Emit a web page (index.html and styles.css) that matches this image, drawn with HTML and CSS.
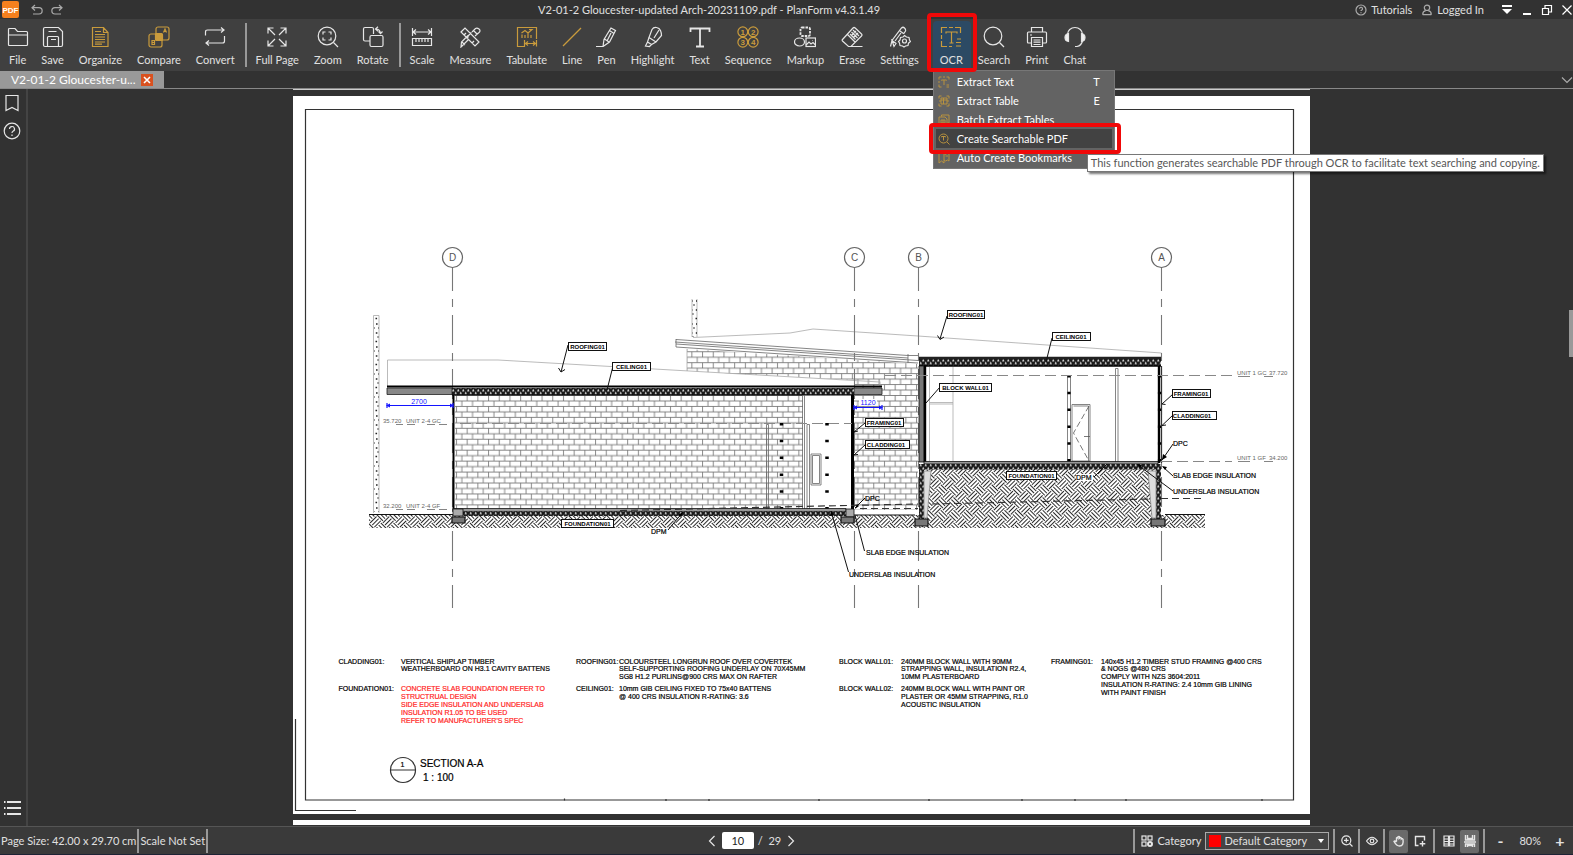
FILE: index.html
```
<!DOCTYPE html>
<html lang="en">
<head>
<meta charset="utf-8">
<title>V2-01-2 Gloucester-updated Arch-20231109.pdf - PlanForm v4.3.1.49</title>
<link rel="stylesheet" href="styles.css">
</head>
<body>
<div class="app">
  <header class="titlebar">
    <div class="titlebar-left">
      <svg class="logo" viewBox="0 0 17 17" aria-hidden="true"><rect width="17" height="17" rx="2" fill="#f5801e"/><text x="8.5" y="12" text-anchor="middle" class="logo-text">PDF</text></svg>
      <button class="plain" aria-label="Undo"><svg class="i12 dim" viewBox="0 0 12 12"><path d="M4 1 1 3.7 4 6.500M1.200 3.700H8a3 3 0 0 1 0 6.300H2"/></svg></button>
      <button class="plain" aria-label="Redo"><svg class="i12 dim" viewBox="0 0 12 12"><path d="M8 1l3 2.700L8 6.500M10.800 3.700H4a3 3 0 0 0 0 6.300h6"/></svg></button>
    </div>
    <h1 class="title">V2-01-2 Gloucester-updated Arch-20231109.pdf - PlanForm v4.3.1.49</h1>
    <div class="titlebar-right">
      <button class="plain link"><svg class="i12 dim" viewBox="0 0 12 12"><circle cx="6" cy="6" r="5"/><path d="M4.500 4.800a1.500 1.500 0 1 1 2.200 1.300q-.7.3-.7 1M6 8.200v1"/></svg>Tutorials</button>
      <button class="plain link"><svg class="i12 dim" viewBox="0 0 12 12"><circle cx="6" cy="3.800" r="2.700"/><path d="M1.700 10.700c0-3 1.500-3.700 3-4M10.300 10.700c0-3-1.500-3.700-3-4M1.700 10.700h8.600"/></svg>Logged In</button>
      <div class="window-buttons">
        <button class="plain" aria-label="Options"><svg class="i12 bright" viewBox="0 0 12 12"><path d="M1 2h10" stroke-width="2"/><path d="M1 5h10L6 10z" fill="#fff" stroke="none"/></svg></button>
        <button class="plain" aria-label="Minimize"><svg class="i12 bright" viewBox="0 0 12 12"><path d="M2 10h8" stroke-width="2"/></svg></button>
        <button class="plain" aria-label="Restore"><svg class="i12 bright" viewBox="0 0 12 12"><path d="M1.500 4.500h6v6h-6zM4 4V1.500h6.500V8H8"/></svg></button>
        <button class="plain" aria-label="Close"><svg class="i12 bright" viewBox="0 0 12 12"><path d="M1.500 1.500l9 9M10.500 1.500l-9 9"/></svg></button>
      </div>
    </div>
  </header>

  <nav class="toolbar" aria-label="Tools">
    <button class="tool"><svg viewBox="0 0 22 22"><path d="M1.500 18.500v-15q0-1 1-1h5.500l2.500 3h9q1 0 1 1v12q0 1-1 1h-17q-1 0-1-1zM1.500 9h19"/></svg>File</button>
    <button class="tool"><svg viewBox="0 0 22 22"><path d="M3 1.500h13.500l4 4V19q0 1.500-1.500 1.500H3q-1.500 0-1.500-1.500V3Q1.500 1.500 3 1.500zM5.500 20v-8.500q0-1 1-1h9q1 0 1 1V20M6.500 5.500h8M9 13.500h5"/></svg>Save</button>
    <button class="tool gold"><svg viewBox="0 0 22 22"><path d="M3.500 1.500h11l4.500 5v14H3.500zM14.500 1.500v5h4.500M6 5.500h6M6 8.500h10M6 11h10M6 13.500h10M6 16h10M6 18.200h7"/></svg>Organize</button>
    <button class="tool gold"><svg viewBox="0 0 22 22"><rect x="8" y="1" width="13" height="13" rx="2"/><rect x="1" y="8" width="13" height="13" rx="2"/><rect x="7.500" y="7.500" width="7" height="7" rx="1" fill="#c99b3c"/><path d="M15.500 6.500 17 3l1.500 3.500M16 5.500h2M4 14.500v4h2.500v-4zM4 16.500h2.500"/></svg>Compare</button>
    <button class="tool"><svg viewBox="0 0 22 22"><path d="M1.500 9.500V6q0-2 2-2H20M17 1.500 20 4l-3 2.500M20.500 10v5q0 2-2 2H2M5 14.500 2 17l3 2.500"/></svg>Convert</button>
    <span class="divider"></span>
    <button class="tool"><svg viewBox="0 0 22 22"><path d="M9 9 2 2M2 7.500V2h5.500M13 9l7-7M14.500 2H20v5.500M9 13l-7 7M2 14.500V20h5.500M13 13l7 7M20 14.500V20h-5.500"/></svg>Full Page</button>
    <button class="tool"><svg viewBox="0 0 22 22"><circle cx="10" cy="10" r="8.800"/><path d="M16.500 16.500 21 21M6 8.500V6h2.500M11.500 6H14v2.500M14 11.500V14h-2.500M8.500 14H6v-2.500"/></svg>Zoom</button>
    <button class="tool"><svg viewBox="0 0 22 22"><path d="M8 15H3q-1.500 0-1.500-1.500V3Q1.500 1.500 3 1.500h7q1.500 0 1.500 1.500v5M14 3q4 0 4.500 4.500M16.500 5.500l2 2.200 2-2.200M16 .800 13.500 3 16 5.200"/><rect x="8" y="9.500" width="13" height="11" rx="1.500"/></svg>Rotate</button>
    <span class="divider"></span>
    <button class="tool"><svg viewBox="0 0 22 22"><path d="M1.500 2v8M20.500 2v8M2 6h18M5 3.500 2 6l3 2.500M17 3.500 20 6l-3 2.500M1.500 12.500h19v7h-19zM5 12.500V16M8 12.500V16M11 12.500V16M14 12.500V16M17 12.500V16"/></svg>Scale</button>
    <button class="tool"><svg viewBox="0 0 22 22"><path d="M2 6l4-4 14 14-4 4zM5 9l2-2M8 12l1.500-1.500M13 17l2-2M9.500 13.500 3 20l-1 1 .5-5L9 9.500M13 6l3.500-3.500Q18 1.500 20 3t0 3.500L16 10M12.500 6.500 9 10M14.500 4.500l3.500 3.500M3 16l3 3"/></svg>Measure</button>
    <button class="tool gold"><svg viewBox="0 0 22 22"><path d="M9 20.500H1.500v-19h19V13M6 12V8.500M9 12V9M12 12V7M15 12V9M5.500 7 9 4.500 12 7l4-3.500h-3M8.500 14v6.500M20.500 14v6.500M9 17.500h11M12 15.500l-2.500 2 2.500 2M17 15.500l2.500 2-2.500 2"/></svg>Tabulate</button>
    <button class="tool gold"><svg viewBox="0 0 22 22"><path d="M2 20 20 2"/></svg>Line</button>
    <button class="tool"><svg viewBox="0 0 22 22"><path d="M1 20.500h7l1-7L16 2l4.500 2.500L14.500 16 8 20.500M9.500 13l4.500 3M14.500 4.500l4.500 3M12 15l4-8"/></svg>Pen</button>
    <button class="tool"><svg viewBox="0 0 22 22"><path d="M10 3.500q1.500-2.500 4.500-2t4 3 1 5L14 16l-7-4.500zM7 11.500 5.500 16l4 2.500L14 16M5.500 16 3.500 20l4 .500 2-2M17 4l-5 8"/></svg>Highlight</button>
    <button class="tool"><svg viewBox="0 0 22 22"><path d="M1.500 6V2.500h19V6M11 2.500v18M7 20.500h8" stroke-width="1.800"/></svg>Text</button>
    <button class="tool gold"><svg viewBox="0 0 22 22"><circle cx="5.800" cy="5.800" r="4.900"/><circle cx="16.200" cy="5.800" r="4.900"/><circle cx="5.800" cy="16.200" r="4.900"/><circle cx="16.200" cy="16.200" r="4.900"/><g class="seq"><text x="5.800" y="8.500">1</text><text x="16.200" y="8.500">2</text><text x="5.800" y="19">3</text><text x="16.200" y="19">4</text></g></svg>Sequence</button>
    <button class="tool"><svg viewBox="0 0 22 22"><rect x="6.500" y="1.500" width="9.500" height="8.500" rx="1.500" stroke-width="1.800" stroke-dasharray="2.500 1"/><ellipse cx="5.500" cy="16" rx="5" ry="4"/><rect x="12" y="12" width="9.500" height="8.500"/><path d="M12 19l3-3 2 2 2-1.500 2.500 2.500M18.500 14.500h.5"/></svg>Markup</button>
    <button class="tool"><svg viewBox="0 0 22 22"><path d="M1.500 13.500 12 2q1-1 2.200 0L20.500 8q1 1 0 2L10 20.500H7.500L1.500 15q-.7-.700 0-1.500zM6.500 8.500 14 16M10 20.500h11.500M12 4l6 6M10.500 6l6 6M9 8l5.500 5.500M17 7l-5 5M15 5l-5 5"/></svg>Erase</button>
    <button class="tool"><svg viewBox="0 0 22 22"><path d="M1.500 20.500 3 14.500 12.500 2q1.500-1.500 3 0t1 3l-2 3M3 14.500l4 3-2 3zM11 5l3.500 2.500M6 15l6-8"/><circle cx="15.500" cy="15" r="2"/><path d="M15.500 9.500l2 1.500 2.500.5.500 2.500 1 1.500-2 1.700-.5 2.300-2.500.500-1.500 1-1.500-1-2.500-.500-.500-2.500-1-1.500 1.500-1.500.5-2.500 2.500-.500z"/></svg>Settings</button>
    <span class="divider"></span>
    <div class="ocr">
      <button class="tool gold active" aria-haspopup="true" aria-expanded="true"><svg viewBox="0 0 22 22"><path d="M1.500 7V1.500H7M9 1.500h4M15 1.500h5.500V7M1.500 9v4M1.500 15v5.500H7M9 20.500h3M6 7.500V6h11v1.500M11.500 6v11M9.500 17h4M17 13h4M16 16.500h5M16 20h5"/></svg>OCR</button>
      <ul class="menu" role="menu">
        <li><button class="item" role="menuitem"><svg viewBox="0 0 12 12"><path d="M1 3.500V1h2.500M5 1h2M8.500 1H11v2.500M1 5v2M1 8.500V11h2.500M3.500 4.500V4h5v.5M6 4v5M8.500 9H11M8.500 11H11"/></svg><span>Extract Text</span><kbd>T</kbd></button></li>
        <li><button class="item" role="menuitem"><svg viewBox="0 0 12 12"><path d="M1 3.500V1h2.500M8.500 1H11v2.500M1 8.500V11h2.500M8.500 11H11V8.500M3 3h6v6H3zM3 5h6M5.500 3v6M1 6h2M9 6h2"/></svg><span>Extract Table</span><kbd>E</kbd></button></li>
        <li><button class="item" role="menuitem"><svg viewBox="0 0 12 12"><path d="M3.500 2.500V1H11v8H9.500M1 3h6l2 2v6H1zM3 6h4v3H3zM5 6v3"/></svg><span>Batch Extract Tables</span></button></li>
        <li><button class="item current" role="menuitem"><svg viewBox="0 0 12 12"><circle cx="5.500" cy="5.500" r="4.500"/><path d="M9 9l2.500 2.500M3.500 4.300V3.500h4v.8M5.500 3.500v4"/></svg><span>Create Searchable PDF</span></button></li>
        <li><button class="item" role="menuitem"><svg viewBox="0 0 12 12"><path d="M3 1H1v10l2.500-2L6 11V8M6 1.500l1.500 1 2-1.500L11 2v7l-1.500-1L7.500 9 6 8zM7.500 4H10"/></svg><span>Auto Create Bookmarks</span></button></li>
      </ul>
      <div class="mark mark-button"></div>
      <div class="mark mark-item"></div>
      <div class="tooltip" role="tooltip">This function generates searchable PDF through OCR to facilitate text searching and copying.</div>
    </div>
    <button class="tool"><svg viewBox="0 0 22 22"><circle cx="10" cy="10" r="8.800"/><path d="M16.500 16.500 21 21"/></svg>Search</button>
    <button class="tool"><svg viewBox="0 0 22 22"><path d="M5.500 6V1.500h11V6M5.500 17h-3q-1 0-1-1V7q0-1 1-1h17q1 0 1 1v9q0 1-1 1h-3M5.500 11.500h11v9h-11zM7.500 14h7M7.500 16.200h7M7.500 18.500h7M4 9h2"/></svg>Print</button>
    <button class="tool"><svg viewBox="0 0 22 22"><path d="M3.500 8.500a7.500 7 0 0 1 15 0M18.500 15q-1 4.500-5.500 5.500h-2"/><path d="M4.500 7.500v8Q1 15 1 11.500T4.500 7.500zM17.500 7.500v8q3.500-.5 3.500-4t-3.500-4z" fill="#f0f0f0"/></svg>Chat</button>
  </nav>

  <div class="tabs">
    <div class="tab"><span>V2-01-2 Gloucester-u...</span><button class="tab-close" aria-label="Close tab"><svg viewBox="0 0 12 12"><path d="M3 3l6 6M9 3l-6 6"/></svg></button></div>
    <button class="plain tabs-more" aria-label="All tabs"><svg class="i12 dim" viewBox="0 0 12 12"><path d="M1 3.500l5 5 5-5"/></svg></button>
  </div>

  <div class="workspace">
    <aside class="rail">
      <button class="plain" aria-label="Bookmarks"><svg class="i18" viewBox="0 0 18 18"><path d="M3 1.500h12v15L9 13.500 3 16.500z"/></svg></button>
      <button class="plain" aria-label="Help"><svg class="i18" viewBox="0 0 18 18"><circle cx="9" cy="9" r="7.800"/><path d="M6.500 7a2.500 2.500 0 1 1 3.500 2.300q-1 .5-1 1.700M9 12.500V14"/></svg></button>
      <button class="plain rail-end" aria-label="Outline"><svg class="i18" viewBox="0 0 18 18"><path d="M1 3h1.500M4 3h14M1 9h1.500M4 9h14M1 15h1.500M4 15h14" stroke-width="1.800"/></svg></button>
    </aside>
    <main class="viewer">
      <svg class="sheet" viewBox="293 89 1017 737" role="img" aria-label="Section A-A drawing">
        <defs>
          <pattern id="brick" width="10.700" height="10.940" patternUnits="userSpaceOnUse" x="454" y="395"><path d="M0 .5H10.700M0 5.970H10.700M2.500 .5V5.970M7.850 5.970V11" stroke="#6a6a6a" stroke-width=".8" fill="none"/></pattern>
          <pattern id="earth" width="18" height="18" patternUnits="userSpaceOnUse" patternTransform="rotate(45)"><path d="M0 1.500H9M0 4.500H9M0 7.500H9M10.500 0V9M13.500 0V9M16.500 0V9M1.500 9V18M4.500 9V18M7.500 9V18M9 10.500H18M9 13.500H18M9 16.500H18" stroke="#111" stroke-width=".9" fill="none"/></pattern>
          <pattern id="insul" width="5" height="6" patternUnits="userSpaceOnUse" x="452" y="388.500"><rect width="5" height="6" fill="#1a1a1a"/><path d="M0 2.800 1.250.4 2.500 2.800zM2.500 5.600 3.750 3.200 5 5.600z" fill="#fff"/></pattern>
          <pattern id="rubble" width="5" height="23" patternUnits="userSpaceOnUse"><path d="M1 2h1.600M3.400 6h1.200M.8 11h1.600M2.500 15h1M.5 19.500h1.600" stroke="#222" stroke-width="1.500"/></pattern>
          <g id="bubble"><circle cy="257.500" r="10" fill="#fff" stroke="#666"/></g>
        </defs>

        <path d="M293 96H1310V814H293zM293 820H1310V825H293z" fill="#fff"/>
        <path d="M293 89H1310V90H293z" fill="#ccc"/>
        <path d="M305.500 109.500h988v690.500h-988zM295.500 719v91.500H356" class="ln"/>
        <path d="M564.500 798.500v2M666 799v2M709 799v2M819 799v2M929 799v2M1022 799v2M1075 799v2M1126 799v2M1262 799v2" class="ln"/>

        <!-- side posts -->
        <path d="M373.500 315.500h5.500V513M373.500 315.500V513M692 299v38M697 299v38" class="thin"/>
        <path d="M374 316h5v196h-5zM692 299h5v38h-5z" fill="url(#rubble)"/>

        <!-- brickwork -->
        <path d="M687 349 918 364V510H854V380L687 371z" fill="url(#brick)"/>
        <path d="M455 395h348v114H455z" fill="url(#brick)"/>
        <path d="M880 381.500v5.500M687 349v22" class="thin"/>

        <!-- roof outlines -->
        <path d="M387.500 386V360H498L880 382M693 337.500 790 333 813 329 918 336 1161.500 353v4" class="thin"/>
        <path d="M676 339.500 908 355.500H918M675 342 908 358M676 344 918 360.500M676 339v8L918 363M908 354v9" class="mid"/>

        <!-- earth hatch -->
        <path d="M369 515h549v13H369zM1161 515h44v13h-44zM919 469h242v59H919z" fill="url(#earth)"/>
        <path d="M369 514.500h84M854 515h61M1165 514.500h40" stroke="#111" stroke-width="1.200"/>

        <!-- grid lines -->
        <g stroke="#777" stroke-width="1.100" stroke-dasharray="30 8 8 8">
          <path d="M452.500 261V608M854.500 261V608M918.500 261V608M1161.500 261V608"/>
        </g>
        <use href="#bubble" x="452.500"/><use href="#bubble" x="854.500"/><use href="#bubble" x="918.500"/><use href="#bubble" x="1161.500"/>
        <g class="grid-name"><text x="452.500" y="261">D</text><text x="854.500" y="261">C</text><text x="918.500" y="261">B</text><text x="1161.500" y="261">A</text></g>

        <!-- lower building -->
        <path d="M387 388h65v6.500h-65zM854 388h28v6.500h-28z" fill="#888" stroke="#222" stroke-width=".8"/>
        <path d="M452 388h402v7H452z" fill="url(#insul)"/>
        <path d="M387 386.500h495" stroke="#000" stroke-width="2.200"/>
        <path d="M452 395h402" stroke="#000" stroke-width="1.200"/>
        <path d="M453.500 395V512" stroke="#000" stroke-width="2"/>
        <path d="M852.500 395V509" stroke="#000" stroke-width="3"/>
        <path d="M804.500 396h46v112h-46z" fill="#fff"/>
        <path d="M802.500 395V509M804.500 395V509M766.500 424.500h2V509h-2zM807 424.500h2.500V509H807zM811 454h10v31h-10zM812.500 455.500h7v28h-7z" class="mid"/>
        <path d="M460 423.500H852" class="dash"/>
        <path d="M781.500 423V510M827 423V510" stroke="#000" stroke-width="3.500" stroke-dasharray="2.500 14.300"/>
        <path d="M453 508.500H846v3H453z" fill="#999" stroke="#111" stroke-width=".8"/>
        <path d="M462 511.500h384v4.500H462z" fill="url(#insul)"/>
        <path d="M453 509h10v7h-10zM846 509h8v8h-8z" fill="#aaa" stroke="#111" stroke-width=".8"/>
        <path d="M452 517h13v6h-13zM841 517h13v6h-13z" fill="#777" stroke="#111"/>
        <path d="M620 510.500 800 506.500 918 504" class="dash-dark"/>
        <path d="M860 508.500h58" class="dash-dark"/>

        <!-- upper building -->
        <path d="M926 366h232v95H926z" fill="#fff"/>
        <path d="M919 358h242v8H919z" fill="url(#insul)"/>
        <path d="M919 358h242" stroke="#222" stroke-width="2.400"/>
        <path d="M919 366h242" stroke="#000" stroke-width="1.500"/>
        <path d="M919 366h5v96h-5z" fill="#777" stroke="#111" stroke-width=".8"/>
        <path d="M925 366v96M1159 366v97" stroke="#000" stroke-width="2.400"/>
        <path d="M1161.500 366V463" stroke="#333"/>
        <path d="M929.500 367v94M953 367v94M929.500 402.500H953M929.500 404H953" class="thin"/>
        <path d="M1067.500 375.500h3V461h-3zM1115.500 368.500h2.500V468h-2.500zM1072 404.500h18V461h-18zM1073.500 406h15V461" class="mid"/>
        <path d="M1089 406 1073.500 433 1089 461M1084 436.500h6" class="dash-mid"/>
        <path d="M1069 375V462M1159.500 375V462" stroke="#000" stroke-width="3.200" stroke-dasharray="2.500 14.300"/>
        <path d="M885 375.500H1232M1161 461.500H1232" class="dash"/>
        <path d="M924 461.500h234v2.500H924z" fill="#999" stroke="#111" stroke-width=".8"/>
        <path d="M919 464h242v5.500H919zM919 464h5v55h-5zM1156 464h5v55h-5z" fill="url(#insul)"/>
        <path d="M924 471h7l-4 47h-3zM1148 471h8v47h-4z" fill="#ddd" stroke="#888" stroke-width=".8"/>
        <path d="M915 519h13v7h-13zM1151 519h14v7h-14z" fill="#777" stroke="#111"/>
        <path d="M932 504 1150 499M1161 498.500h42" class="dash-dark"/>

        <!-- leaders -->
        <path d="M568 345 561 372M558.500 368l2.500 4 4-2.500M612.500 368 607 390M947 316 940 339M937.500 335.500l2.500 4 4-2.500M1052 338 1046 362M940 387 926 403M865 423 854 432l4-1M865 445 854 455l4-.5M865 498 855 508M864.500 551 855 515M848.500 572 831 511M668 530 683 512M1173 394 1162 404l3.500.500M1173 415 1162 425.500l4-.500M1173 444 1162 460M1173 476 1163 467M1173 491 1138 465M1094 477 1107 464" class="leader"/>
        <path d="M855 509l2-5 2 2zM831 511l-1 5 4-1zM683 512l-5 3 3 2zM1162 460l1-6 4 3zM1162 466l5 1-2 3zM1137 464l5 1-2 3z"/>

        <!-- boxed tags -->
        <g class="tag-box">
          <rect x="568.500" y="342.500" width="38" height="8"/><rect x="612.500" y="362.500" width="38" height="8"/>
          <rect x="865.500" y="418.500" width="38" height="8"/><rect x="865.500" y="440.500" width="44" height="8"/>
          <rect x="561.500" y="519.500" width="52" height="8"/><rect x="947.500" y="310.500" width="37" height="8"/>
          <rect x="1052.500" y="332.500" width="38" height="8"/><rect x="939.500" y="383.500" width="52" height="8"/>
          <rect x="1172.500" y="389.500" width="38" height="8"/><rect x="1172.500" y="411.500" width="44" height="8"/>
          <rect x="1006.500" y="471.500" width="50" height="8"/><rect x="1076" y="474" width="17" height="7" stroke="none"/>
        </g>
        <g class="tag">
          <text x="587.500" y="349">ROOFING01</text><text x="631.500" y="369">CEILING01</text>
          <text x="884" y="425">FRAMING01</text><text x="886" y="447">CLADDING01</text>
          <text x="587.500" y="526">FOUNDATION01</text><text x="966" y="317">ROOFING01</text>
          <text x="1071" y="339">CEILING01</text><text x="965.500" y="390">BLOCK WALL01</text>
          <text x="1191" y="396">FRAMING01</text><text x="1192" y="418">CLADDING01</text>
          <text x="1031.500" y="478">FOUNDATION01</text>
        </g>
        <g class="note">
          <text x="651" y="534">DPM</text><text x="865" y="501">DPC</text>
          <text x="866" y="555">SLAB EDGE INSULATION</text><text x="849" y="577">UNDERSLAB INSULATION</text>
          <text x="1173" y="446">DPC</text><text x="1076" y="480">DPM</text>
          <text x="1173" y="478">SLAB EDGE INSULATION</text><text x="1173" y="494">UNDERSLAB INSULATION</text>
        </g>
        <g class="level">
          <text x="383" y="423">35.720</text><text x="406" y="423">UNIT 2-4 GC</text>
          <text x="383" y="508">32.200</text><text x="406" y="508">UNIT 2-4 GF</text>
          <text x="1237" y="375">UNIT 1 GC</text><text x="1269" y="375">37.720</text>
          <text x="1237" y="460">UNIT 1 GF</text><text x="1269" y="460">34.200</text>
        </g>
        <path d="M396 424.500h7M407 424.500h8M427 424.500h8M439 424.500h8M396 509.500h7M407 509.500h8M427 509.500h8M439 509.500h8M1238 376.500h12M1264 376.500h9M1238 461.500h12M1264 461.500h9" class="mid"/>
        <path d="M387 405.500h66M854 407.500h28M387 403v5M453 403v5M854 405v5M882 405v5" stroke="#1414ff" fill="none"/>
        <path d="M386 405.500l4-2v4zM454 405.500l-4-2v4zM853 407.500l4-2v4zM883 407.500l-4-2v4z" fill="#1414ff"/>
        <path d="M859 399h18v6.500h-18z" fill="#fff"/>
        <g class="dim-text"><text x="419" y="404">2700</text><text x="868" y="405">1120</text></g>

        <!-- schedule -->
        <g class="note">
          <text x="338.500" y="664">CLADDING01:</text>
          <text x="401" y="664">VERTICAL SHIPLAP TIMBER</text><text x="401" y="671">WEATHERBOARD ON H3.1 CAVITY BATTENS</text>
          <text x="338.500" y="691">FOUNDATION01:</text>
          <g class="revised"><text x="401" y="691">CONCRETE SLAB FOUNDATION REFER TO</text><text x="401" y="699">STRUCTRUAL DESIGN</text><text x="401" y="707">SIDE EDGE INSULATION AND UNDERSLAB</text><text x="401" y="715">INSULATION R1.05 TO BE USED</text><text x="401" y="723">REFER TO MANUFACTURER'S SPEC</text></g>
          <text x="576" y="664">ROOFING01:</text>
          <text x="619" y="664">COLOURSTEEL LONGRUN ROOF OVER COVERTEK</text><text x="619" y="671">SELF-SUPPORTING ROOFING UNDERLAY ON 70X45MM</text><text x="619" y="679">SG8 H1.2 PURLINS@900 CRS MAX ON RAFTER</text>
          <text x="576" y="691">CEILING01:</text>
          <text x="619" y="691">10mm GIB CEILING FIXED TO 75x40 BATTENS</text><text x="619" y="699">@ 400 CRS INSULATION R-RATING: 3.6</text>
          <text x="839" y="664">BLOCK WALL01:</text>
          <text x="901" y="664">240MM BLOCK WALL WITH 90MM</text><text x="901" y="671">STRAPPING WALL, INSULATION R2.4,</text><text x="901" y="679">10MM PLASTERBOARD</text>
          <text x="839" y="691">BLOCK WALL02:</text>
          <text x="901" y="691">240MM BLOCK WALL WITH PAINT OR</text><text x="901" y="699">PLASTER OR 45MM STRAPPING, R1.0</text><text x="901" y="707">ACOUSTIC INSULATION</text>
          <text x="1051" y="664">FRAMING01:</text>
          <text x="1101" y="664">140x45 H1.2 TIMBER STUD FRAMING @400 CRS</text><text x="1101" y="671">&amp; NOGS @480 CRS</text><text x="1101" y="679">COMPLY WITH NZS 3604:2011</text><text x="1101" y="687">INSULATION R-RATING: 2.4 10mm GIB LINING</text><text x="1101" y="695">WITH PAINT FINISH</text>
        </g>
        <path d="M390.500 770a12.500 12.500 0 1 0 25 0a12.500 12.500 0 1 0-25 0h25" class="ln"/>
        <text x="402.500" y="767" text-anchor="middle" class="note">1</text>
        <g class="heading"><text x="420" y="767">SECTION A-A</text><text x="423" y="781">1 : 100</text></g>
      </svg>
      <span class="scroll-thumb"></span>
    </main>
  </div>

  <footer class="status">
    <div class="status-left"><span class="cell">Page Size: 42.00 x 29.70 cm</span><span class="cell">Scale Not Set</span></div>
    <div class="pager">
      <button class="plain" aria-label="Previous page"><svg class="i12" viewBox="0 0 12 12"><path d="M8.500 1 3.500 6l5 5"/></svg></button>
      <input type="text" value="10" aria-label="Page">
      <span>/&nbsp; 29</span>
      <button class="plain" aria-label="Next page"><svg class="i12" viewBox="0 0 12 12"><path d="M3.500 1l5 5-5 5"/></svg></button>
    </div>
    <div class="status-right">
      <div class="group category">
        <svg class="i12" viewBox="0 0 12 12"><rect x="1" y="1" width="4" height="4"/><rect x="7" y="1" width="4" height="4"/><rect x="1" y="7" width="4" height="4"/><circle cx="9" cy="9" r="2" stroke-width="2"/></svg>
        <label for="cat">Category</label>
        <div class="select"><span class="swatch"></span><select id="cat"><option>Default Category</option></select><svg class="caret" viewBox="0 0 6 4"><path d="M0 0h6L3 4z" fill="#fff"/></svg></div>
      </div>
      <div class="group"><button class="plain sq" aria-label="Zoom area"><svg class="i12" viewBox="0 0 12 12"><circle cx="5.300" cy="5.300" r="4.500"/><path d="M8.500 8.500l3 3M3 5.300h4.600M5.300 3v4.600"/></svg></button></div>
      <div class="group"><button class="plain sq" aria-label="View"><svg class="i12" viewBox="0 0 12 12"><path d="M.5 6Q6-1.500 11.500 6 6 13.500.5 6z"/><circle cx="6" cy="6" r="1.800"/></svg></button></div>
      <div class="group pair"><button class="plain sq on" aria-label="Pan"><svg class="i12" viewBox="0 0 12 12"><path d="M3.500 6.500V3q.8-1 1.500 0V2q.9-1 1.700 0v1q.9-.8 1.600 0v1q1-.8 1.700.3Q11 11 6.500 11 3.500 11 1 6.500q.8-1.200 2.500.5" stroke-width="1.400"/></svg></button><button class="plain sq" aria-label="Select area"><svg class="i12" viewBox="0 0 12 12"><path d="M4.500 10.500h-3v-9h9v4M8.500 6v5.500M5.700 8.700h5.600" stroke-width="1.400"/></svg></button></div>
      <div class="group pair"><button class="plain sq" aria-label="Two pages"><svg class="i12" viewBox="0 0 12 12"><path d="M1 1h4.500v10H1zM6.500 1H11v10H6.500zM1 4h4.500M1 6.500h4.500M1 9h4.500M6.500 4H11M6.500 6.500H11M6.500 9H11"/></svg></button><button class="plain sq on" aria-label="Continuous"><svg class="i12" viewBox="0 0 12 12"><path d="M1.500 0v5h9V0M3.500 0v3.500h5V0M0 7h12M1.500 12V9h9v3M3.500 12v-1.500h5V12" stroke-width="1.400"/></svg></button></div>
      <div class="group zoom"><button class="plain sign" aria-label="Zoom out">-</button><span>80%</span><button class="plain sign" aria-label="Zoom in">+</button></div>
    </div>
  </footer>
</div>
</body>
</html>
```
FILE: styles.css
```
* { box-sizing: border-box; }
body { margin: 0; background: #323232; color: #e0e0e0; font: 11px/16px Lato, "Open Sans", sans-serif; }
.app { height: 100vh; display: flex; flex-direction: column; overflow: hidden; }
button, input, select { font: inherit; color: inherit; }
svg { fill: none; stroke: #e6e6e6; stroke-width: 1.2; flex: none; }
.plain { border: 0; background: none; padding: 0; display: flex; align-items: center; justify-content: center; }
.i12 { width: 12px; height: 12px; }
.i18 { width: 18px; height: 18px; }
.dim { stroke: #aaa; }
.bright { stroke: #fff; }

.titlebar { height: 19px; flex: none; display: flex; align-items: center; background: #323232; }
.titlebar-left { display: flex; align-items: center; gap: 8px; padding-left: 2px; }
.logo { width: 17px; height: 17px; stroke: none; margin-right: 4px; }
.logo-text { font: bold 8px "Liberation Sans", sans-serif; fill: #fff; }
.title { flex: 1; margin: 0; text-align: center; font-size: 11px; font-weight: 400; }
.titlebar-right { display: flex; align-items: center; gap: 9px; }
.link { gap: 4px; }
.window-buttons { display: flex; gap: 8px; margin-left: 8px; }

.toolbar { height: 52px; flex: none; display: flex; align-items: stretch; padding-left: 2px; background: #404040; }
.tool { display: flex; flex-direction: column; align-items: center; gap: 4px; border: 0; background: none; padding: 7px 8px 0 7px; white-space: nowrap; }
.tool svg { width: 22px; height: 22px; margin: 0 -4px; }
.gold svg { stroke: #c99b3c; }
.seq { fill: #c99b3c; stroke: none; font: bold 8px "Liberation Sans", sans-serif; text-anchor: middle; }
.divider { width: 2px; margin: 4px 2px; background: #999; }
.ocr { position: relative; display: flex; }
.active { background: #2c4a64; border-radius: 4px; margin-top: 2px; padding-top: 5px; }

.menu { position: absolute; z-index: 2; top: 51px; left: 0; width: 182px; margin: 0; padding: 1px 2px; list-style: none; background: #636363; border: 1px solid #777; }
.item { width: 100%; height: 19px; display: flex; align-items: center; gap: 7px; border: 0; background: none; padding: 0 12px 0 2px; color: #fff; text-align: left; }
.item svg { width: 12px; height: 12px; stroke: #b8923f; stroke-width: 1; }
.item span { flex: 1; }
.item kbd { font: inherit; }
.item.current { background: #424242; }
.mark { position: absolute; z-index: 3; border: 4px solid #f00808; border-radius: 4px; pointer-events: none; }
.mark-button { top: -6px; left: -6px; right: -6px; height: 59px; }
.mark-item { top: 104px; left: -4px; width: 192px; height: 31px; }
.tooltip { position: absolute; z-index: 4; top: 135px; left: 154px; padding: 0 3px; line-height: 16px; white-space: nowrap; color: #575757; background: #fff; border: 1px solid #777; box-shadow: 2px 2px 2px #0008; }

.tabs { height: 18px; flex: none; display: flex; justify-content: space-between; border-bottom: 1px solid #888; }
.tab { display: flex; align-items: center; gap: 5px; padding: 0 11px; background: #999; color: #fff; font-size: 12px; }
.tab-close { width: 12px; height: 12px; padding: 0; border: 0; background: #d9511f; display: flex; }
.tab-close svg { width: 12px; height: 12px; stroke: #fff; stroke-width: 1.6; }

.workspace { flex: 1; min-height: 0; display: flex; }
.rail { width: 28px; flex: none; display: flex; flex-direction: column; align-items: center; gap: 10px; padding: 5px 2px 9px 0; border-right: 2px solid #444; }
.rail-end { margin-top: auto; }
.viewer { position: relative; flex: 1; min-width: 0; padding-left: 2px; overflow: hidden; display: flex; justify-content: center; align-items: flex-start; }
.sheet { width: 1017px; height: 737px; stroke: none; fill: #000; font-family: "Liberation Sans", Arial, sans-serif; }
.scroll-thumb { position: absolute; right: 0; top: 30%; width: 4px; height: 47px; background: #999; }

.ln { fill: none; stroke: #333; stroke-width: 1.2; }
.thin { fill: none; stroke: #aaa; stroke-width: 0.8; }
.mid { fill: none; stroke: #666; stroke-width: 0.8; }
.leader { fill: none; stroke: #111; stroke-width: 1; }
.dash { fill: none; stroke: #888; stroke-dasharray: 11 5; }
.dash-mid { fill: none; stroke: #555; stroke-width: 0.8; stroke-dasharray: 6 3; }
.dash-dark { fill: none; stroke: #333; stroke-dasharray: 7 4; }
.tag-box { fill: #fff; stroke: #111; stroke-width: 1; }
.tag { font-size: 6px; font-weight: 700; text-anchor: middle; }
.note { font-size: 7px; stroke: #000; stroke-width: 0.2; }
.revised { fill: #ff1e1e; stroke: #ff1e1e; }
.level { font-size: 6px; fill: #666; }
.dim-text { font-size: 7px; fill: #1414ff; text-anchor: middle; }
.grid-name { font-size: 10px; fill: #555; text-anchor: middle; }
.heading { font-size: 10px; stroke: #000; stroke-width: 0.2; }

.status { height: 29px; flex: none; display: flex; align-items: center; background: #3a3a3a; border-top: 1px solid #555; border-bottom: 1px solid #1e2335; }
.status-left { flex: 0 0 45%; display: flex; align-self: stretch; padding: 2px 0 1px; }
.cell { display: flex; align-items: center; padding: 0 1px; border-right: 2px solid #999; }
.pager { display: flex; align-items: center; gap: 4px; margin-left: -2px; }
.pager input { width: 32px; height: 17px; border: 0; border-radius: 2px; padding: 0; text-align: center; background: #fff; color: #222; }
.status-right { margin-left: auto; align-self: stretch; display: flex; padding: 2px 0 1px; }
.group { display: flex; align-items: center; padding: 0 2px; border-left: 2px solid #999; }
.category { padding: 0 4px 0 6px; gap: 4px; }
.select { position: relative; display: flex; }
.select select { appearance: none; width: 124px; height: 18px; padding: 0 16px 0 18px; background: #444; border: 1px solid #aaa; border-radius: 0; }
.swatch { position: absolute; left: 4px; top: 3px; width: 12px; height: 12px; background: #f00; }
.caret { position: absolute; right: 5px; top: 7px; width: 6px; height: 4px; stroke: none; }
.sq { width: 19px; height: 23px; border-radius: 2px; }
.sq.on { background: #6a6a6a; }
.pair { gap: 2px; padding: 0 4px; }
.zoom { gap: 11px; padding: 0 5px 0 7px; }
.sign { width: 16px; font-size: 16px; font-weight: 700; }
```
